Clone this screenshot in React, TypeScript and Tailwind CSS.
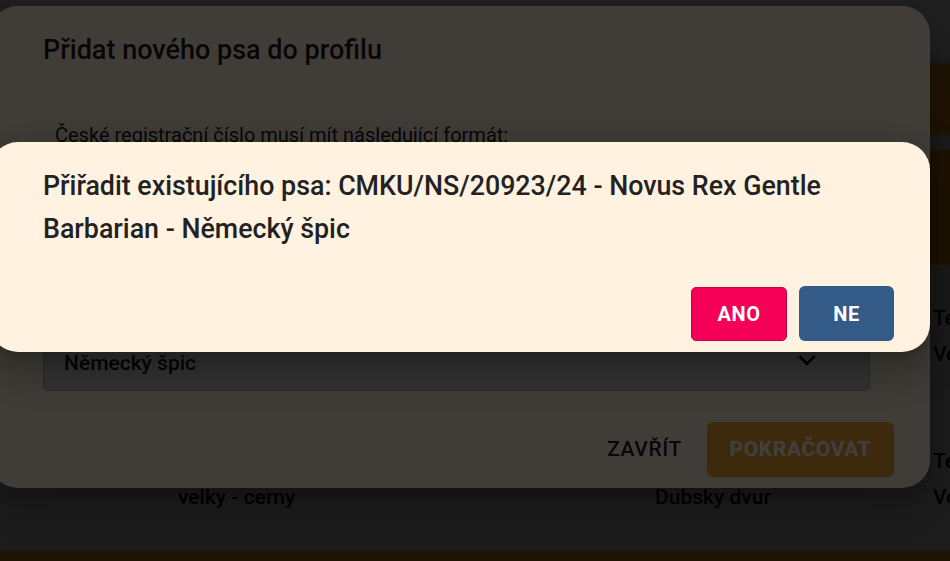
import { useState } from "react";

type DogRow = {
  id: string;
  size: string;
  kennel: string;
  owner: string;
  contact: string;
};

const rows: DogRow[] = [
  { id: "a", size: "malý - bílý", kennel: "Z Lesní stráně", owner: "Tereza Nováková", contact: "Volat po 17h" },
  { id: "b", size: "velky - cerny", kennel: "Dubsky dvur", owner: "Tereza Nováková", contact: "Volat po 17h" },
];

function ExpandMore() {
  return (
    <svg className="shrink-0 text-black/90" fill="currentColor" height={34} viewBox="0 0 24 24" width={34}>
      <path d="M16.59 8.59 12 13.17 7.41 8.59 6 10l6 6 6-6z" />
    </svg>
  );
}

const dialogShadow =
  "shadow-[0_11px_15px_-7px_rgba(0,0,0,0.2),0_24px_38px_3px_rgba(0,0,0,0.14),0_9px_46px_8px_rgba(0,0,0,0.12)]";

export default function App() {
  const [breed] = useState("Německý špic");

  return (
    <div className="relative h-[561px] w-[950px] overflow-hidden bg-[#e2e2e2] font-['Roboto','Noto_Sans',sans-serif]">
      {/* page behind the dialogs */}
      <header className="h-[55px] bg-[#f9f9f9]" />
      <div className="mt-[8px] h-[72px] bg-[#f8a020]" />
      <div className="mt-[15px] h-[115px] bg-[#f8a020]" />
      {rows.map((r, i) => (
        <div
          className={
            "flex items-center text-[21px] font-medium leading-[36px] text-black " +
            (i === 0 ? "h-[142px] border-b border-[#f0f0f0]" : "h-[144px]")
          }
          key={r.id}
        >
          <div className="flex w-[655px] shrink-0 flex-col pl-[178px]">
            <span className="invisible">Velikost</span>
            <span>{r.size}</span>
          </div>
          <div className="flex w-[278px] shrink-0 flex-col">
            <span className="invisible">Chovatelská stanice</span>
            <span>{r.kennel}</span>
          </div>
          <div className="flex flex-col whitespace-nowrap">
            <span>{r.owner}</span>
            <span>{r.contact}</span>
          </div>
        </div>
      ))}
      <div className="h-[10px] bg-[#f8a020]" />

      {/* first modal */}
      <div className="absolute inset-0 bg-black/50" />
      <div
        className={
          "absolute left-[-10px] top-[6px] flex h-[482px] w-[940px] flex-col rounded-[28px] bg-[#fff2e0] pl-[53px] pr-[60px] " +
          dialogShadow
        }
      >
        <h2 className="pt-[23px] text-[27px] font-medium leading-[43px] text-black/90">Přidat nového psa do profilu</h2>
        <p className="ml-[12px] mt-[48px] text-[20px] leading-[30px] text-black/90">
          České registrační číslo musí mít následující formát:
        </p>
        <div className="mt-[40px] flex h-[75px] w-[827px] shrink-0 items-center rounded-[5px] border border-[#a8a8a8] px-[20px] text-[21px] text-black/80">
          CMKU/NS/20923/24
        </div>
        <div className="mt-[51px] flex h-[75px] w-[827px] shrink-0 items-end justify-between rounded-[5px] border border-[#a8a8a8] bg-[#cbcbcb] pb-[13px] pl-[20px] pr-[45px]">
          <span className="text-[21px] font-medium leading-[28px] text-black/90">{breed}</span>
          <ExpandMore />
        </div>
        <div className="mr-[-24px] mt-auto flex items-center justify-end gap-[25px] pb-[11px]">
          <button className="text-[21px] font-medium uppercase tracking-[0.03em] text-black/90" type="button">
            Zavřít
          </button>
          <button
            className="h-[55px] w-[187px] rounded-[6px] bg-[#f4a830] text-[21px] font-bold uppercase tracking-[0.03em] text-white"
            type="button"
          >
            Pokračovat
          </button>
        </div>
      </div>

      {/* confirm modal */}
      <div className="absolute inset-0 bg-black/75" />
      <div
        className={
          "absolute left-[-10px] top-[142px] flex h-[210px] w-[940px] flex-col rounded-[28px] bg-[#fff2e0] pl-[53px] pr-[60px] " +
          dialogShadow
        }
      >
        <p className="pt-[23px] text-[26.8px] font-medium leading-[43px] text-[#222]">
          Přiřadit existujícího psa: CMKU/NS/20923/24 - Novus Rex Gentle Barbarian - Německý špic
        </p>
        <div className="mr-[-24px] mt-auto flex items-center justify-end gap-[12px] pb-[11px]">
          <button
            className="h-[54px] w-[96px] rounded-[5px] border border-[#c8004a] bg-[#f50057] text-[20px] font-bold tracking-[0.03em] text-white"
            type="button"
          >
            ANO
          </button>
          <button
            className="h-[55px] w-[95px] rounded-[6px] bg-[#345a87] text-[20px] font-bold tracking-[0.03em] text-white"
            type="button"
          >
            NE
          </button>
        </div>
      </div>
    </div>
  );
}
